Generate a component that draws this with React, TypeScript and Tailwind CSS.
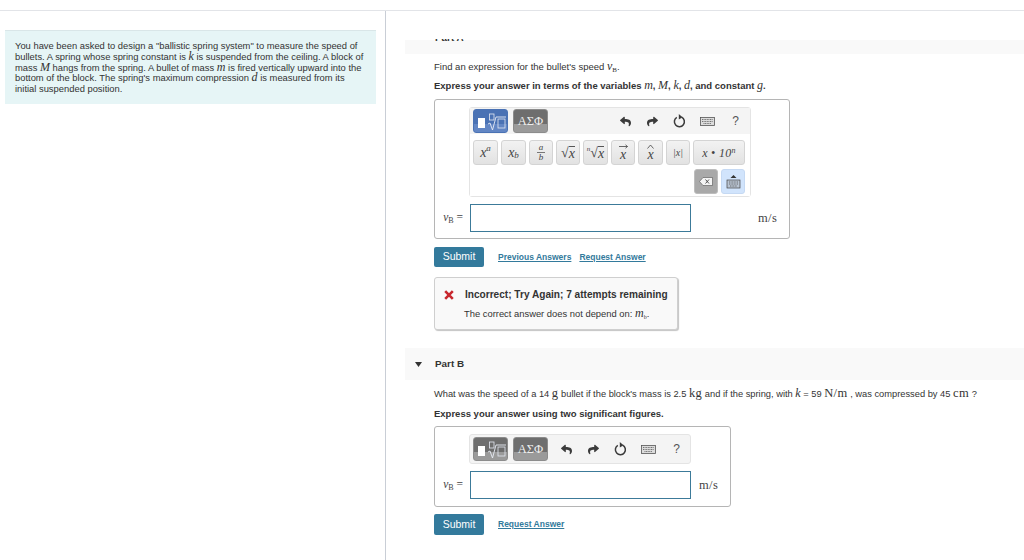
import { FaReply, FaShare } from "react-icons/fa";
import type { ReactNode } from "react";

const sans = "font-['Liberation_Sans',Arial,sans-serif]";
const serif = "font-['Liberation_Serif','Times_New_Roman',serif]";

function V({ children }: { children: ReactNode }) {
  return <i className={`${serif} text-[12px] font-normal leading-[0]`}>{children}</i>;
}

function Unit({ children }: { children: ReactNode }) {
  return <span className={`${serif} text-[12.5px] leading-[0] tracking-[0.4px]`}>{children}</span>;
}

function TemplateIcon() {
  return (
    <svg width="33" height="22" viewBox="1 1 33 22" fill="none">
      <rect x="5" y="9" width="7" height="10" fill="#fff" />
      <rect x="16.5" y="5" width="4.5" height="6" stroke="#e4e8f2" strokeWidth="0.8" />
      <path d="M15 15 L17 14 L19.5 21 L23 8 H33" stroke="#e8ecf5" strokeWidth="0.9" />
      <rect x="25" y="10" width="7" height="9" stroke="#e4e8f2" strokeWidth="0.8" />
    </svg>
  );
}

function ModeButtons({ active }: { active: boolean }) {
  return (
    <div className="flex gap-[5px]">
      <div
        className={`flex h-6 w-[35px] items-center justify-center rounded-[3px] border ${
          active
            ? "border-[#4a72b4] bg-[linear-gradient(#4a72b4_65%,#6286c4_65%)]"
            : "border-[#8c8c8c] bg-[linear-gradient(#6e6e6e_65%,#9a9a9a_65%)]"
        }`}
      >
        <TemplateIcon />
      </div>
      <div
        className={`flex h-6 w-[35px] items-center justify-center rounded-[3px] border border-[#8c8c8c] bg-[linear-gradient(#6e6e6e_65%,#9a9a9a_65%)] ${serif} text-[12.5px] text-[#eee]`}
      >
        ΑΣΦ
      </div>
    </div>
  );
}

function ResetIcon() {
  return (
    <svg width="13" height="14" viewBox="0 0 13 14" fill="none">
      <path d="M8.6 3.2 A5 5 0 1 1 3.8 3.4" stroke="#3b3b3b" strokeWidth="1.5" />
      <path d="M5.8 0 L9.6 3.2 L5.8 5.4 Z" fill="#3b3b3b" />
    </svg>
  );
}

function KeyboardIcon() {
  return (
    <svg width="15" height="9" viewBox="0 0 15 9">
      <rect x="0.5" y="0.5" width="14" height="8" fill="#dcdcdc" stroke="#555" strokeWidth="0.8" />
      <path d="M2 2.5 H13 M2 4.5 H13 M3.5 6.5 H11.5" stroke="#666" strokeWidth="0.9" strokeDasharray="1 .6" />
    </svg>
  );
}

function ToolIcons() {
  return (
    <div className="flex items-center gap-[14px] text-[#3b3b3b]">
      <FaReply size={11} className="w-[13px]" />
      <FaShare size={11} className="w-[13px]" />
      <ResetIcon />
      <KeyboardIcon />
      <span className={`${sans} w-[13px] text-center text-[12px] text-[#555]`}>?</span>
    </div>
  );
}

function MathKey({ w, children }: { w: string; children: ReactNode }) {
  return (
    <div
      className={`flex h-[25px] items-center justify-center rounded-[3px] border border-[#d4d4d4] bg-[linear-gradient(#f2f2f2,#e2e2e2)] ${serif} text-[14px] text-[#444] ${w}`}
    >
      {children}
    </div>
  );
}

function Root({ n }: { n?: boolean }) {
  return (
    <span className="flex items-start">
      {n && <span className="text-[7px] italic leading-[8px]">n</span>}
      <span className="text-[14px] leading-[16px]">√</span>
      <span className="mt-[1px] border-t border-[#555] text-[14px] italic leading-[14px]">x</span>
    </span>
  );
}

// the accent over the x is a small drawing, so it can't collide with the letter
function Accent({ arrow }: { arrow?: boolean }) {
  return (
    <span className="flex flex-col items-center">
      <svg width="9" height="5" viewBox="0 0 9 5" fill="none" stroke="#444" strokeWidth="0.8">
        {arrow ? <path d="M0 2.5 H8.5 M6.5 .8 L8.5 2.5 L6.5 4.2" /> : <path d="M1.5 4.5 L4.5 1 L7.5 4.5" />}
      </svg>
      <span className="italic leading-[12px]">x</span>
    </span>
  );
}

function MathKeys() {
  return (
    <div className="flex flex-col gap-1 bg-white pt-[6px] pr-[5px] pb-[2px] pl-[3px]">
      <div className="flex gap-[3px]">
        <MathKey w="w-[25px]">
          <i>x</i>
          <sup className="text-[9px] italic">a</sup>
        </MathKey>
        <MathKey w="w-[25px]">
          <i>x</i>
          <sub className="text-[9px] italic">b</sub>
        </MathKey>
        <MathKey w="w-[24px]">
          <span className="flex flex-col items-center text-[9px] italic leading-[9px]">
            <span className="border-b border-[#777] px-[2px]">a</span>
            <span>b</span>
          </span>
        </MathKey>
        <MathKey w="w-[24px]">
          <Root />
        </MathKey>
        <MathKey w="w-[25px]">
          <Root n />
        </MathKey>
        <MathKey w="w-[24px]">
          <Accent arrow />
        </MathKey>
        <MathKey w="w-[25px]">
          <Accent />
        </MathKey>
        <MathKey w="w-[24px]">
          <span className="text-[10px] italic">|x|</span>
        </MathKey>
        <MathKey w="w-[52px]">
          <span className="text-[12px] italic tracking-[0.3px]">
            x • 10<sup className="text-[8px]">n</sup>
          </span>
        </MathKey>
      </div>
      <div className="flex justify-end gap-[3px]">
        <div className="flex h-[25px] w-6 items-center justify-center rounded-[3px] border border-[#bdbdbd] bg-[#a9a9a9]">
          <svg width="14" height="9" viewBox="0 0 14 9">
            <path d="M4 .5 H13.5 V8.5 H4 L.5 4.5 Z" fill="#f4f4f4" stroke="#666" strokeWidth="0.7" />
            <path d="M6.5 2.5 L10 6.5 M10 2.5 L6.5 6.5" stroke="#444" strokeWidth="0.9" />
          </svg>
        </div>
        <div className="flex h-[25px] w-6 items-center justify-center rounded-[3px] border border-[#c5d9f3] bg-[#d1e4fc]">
          <svg width="15" height="15" viewBox="0 0 15 15">
            <path d="M7.5 1 L10.5 4 H4.5 Z" fill="#333" />
            <rect x="1" y="6" width="13" height="8" fill="#b9c4d2" stroke="#444" strokeWidth="0.7" />
            <path d="M3 8 H12 M3 10 H12 M4 12 H11" stroke="#555" strokeWidth="0.8" strokeDasharray="1 .6" />
          </svg>
        </div>
      </div>
    </div>
  );
}

function AnswerRow({ unitClass }: { unitClass: string }) {
  return (
    <div className="flex items-center">
      <div className="flex w-[35px] justify-end pr-[7px] text-[#444]">
        <span className={`${serif} whitespace-nowrap text-[11.5px]`}>
          <i>v</i>
          <sub className="text-[8px]">B</sub>&nbsp;=
        </span>
      </div>
      <div className="h-[28px] w-[221px] border border-[#3c7a99] bg-white" />
      <div className={`${unitClass} -mt-[2px] text-[#444]`}>
        <Unit>m/s</Unit>
      </div>
    </div>
  );
}

function SubmitRow({ links, tall }: { links: string[]; tall?: boolean }) {
  return (
    <div className="flex items-center">
      <button
        className={`w-[50px] rounded-[2px] bg-[#337a9c] text-center text-[10.5px] text-white ${tall ? "h-[21px]" : "h-[20px]"}`}
      >
        Submit
      </button>
      <div className="ml-[14px] flex gap-[8px]">
        {links.map((l) => (
          <a key={l} className="text-[8.5px] font-bold text-[#337a9c] underline">
            {l}
          </a>
        ))}
      </div>
    </div>
  );
}

export default function App() {
  return (
    <div className={`${sans} h-[560px] w-[1024px] overflow-hidden bg-white pt-[10px] text-[#333]`}>
      <div className="flex h-[550px] border-t border-[#e2e4e8]">
        <aside className="w-[386px] shrink-0 border-r border-[#c9ced6] pt-[19px] pl-[5px]">
          <div className="h-[74px] w-[371px] border-t border-[#d9e6e8] bg-[#e6f5f6] pt-[10px] pl-[10px] text-[9.4px] leading-[10.8px]">
            <p className="whitespace-nowrap">
              You have been asked to design a "ballistic spring system" to measure the speed of
              <br />
              bullets. A spring whose spring constant is <V>k</V> is suspended from the ceiling. A block of
              <br />
              mass <V>M</V> hangs from the spring. A bullet of mass <V>m</V> is fired vertically upward into the
              <br />
              bottom of the block. The spring's maximum compression <V>d</V> is measured from its
              <br />
              initial suspended position.
            </p>
          </div>
        </aside>

        <main className="min-w-0 flex-1 pt-[29px] pl-[19px]">
          <div className="relative h-[14px] bg-[#f9f9f9]">
            <div className="absolute -top-[1px] left-[30px] h-[3px] overflow-hidden text-[9.9px] font-bold">
              <div className="-mt-[8px]">Part A</div>
            </div>
          </div>

          <div className="pl-[29px]">
            <p className="mt-[7px] text-[9.5px] leading-[12px]">
              Find an expression for the bullet's speed <V>v</V>
              <sub className={`${serif} text-[7px]`}>B</sub>.
            </p>
            <p className="mt-[7px] text-[9.5px] font-bold leading-[12px]">
              Express your answer in terms of the variables <V>m</V>, <V>M</V>, <V>k</V>, <V>d</V>, and constant <V>g</V>.
            </p>

            <div className="mt-[7px] h-[140px] w-[356px] rounded-[3px] border border-[#b5b5b5] pt-[7px]">
              <div className="ml-[34px] w-[282px] rounded-[3px] border border-[#e4e4e4]">
                <div className="flex h-[26px] items-center justify-between bg-[#f4f4f4] pr-[8px] pl-[3px]">
                  <ModeButtons active />
                  <ToolIcons />
                </div>
                <MathKeys />
              </div>
              <div className="mt-[7px]">
                <AnswerRow unitClass="ml-[67px]" />
              </div>
            </div>

            <div className="mt-[8px]">
              <SubmitRow links={["Previous Answers", "Request Answer"]} />
            </div>

            <div className="mt-[10px] h-[53px] w-[244px] rounded-[3px] border border-[#cfcfcf] bg-[#f9f9f9] pt-[11px] pl-[9px] shadow-[1px_1px_1px_#c4c4c4]">
              <div className="flex items-center gap-[11px]">
                <svg width="10" height="10" viewBox="0 0 10 10">
                  <path d="M1.2 1.2 L8.8 8.8 M8.8 1.2 L1.2 8.8" stroke="#c8282e" strokeWidth="2.6" />
                </svg>
                <span className="text-[10.1px] font-bold leading-[12px]">Incorrect; Try Again; 7 attempts remaining</span>
              </div>
              <p className="mt-[7px] ml-[20px] text-[9.4px] leading-[12px]">
                The correct answer does not depend on: <V>m</V>
                <sub className={`${serif} text-[6px]`}>b</sub>.
              </p>
            </div>
          </div>

          <div className="mt-[18px] flex h-[32px] items-center bg-[#f9f9f9] pl-[10px]">
            <svg width="7" height="5" viewBox="0 0 7 5" className="mr-[13px]">
              <path d="M0 0 H7 L3.5 5 Z" fill="#333" />
            </svg>
            <span className="text-[9.9px] font-bold">Part B</span>
          </div>

          <div className="pl-[29px]">
            <p className="mt-[8px] whitespace-nowrap text-[9.3px] leading-[12px]">
              What was the speed of a 14 <Unit>g</Unit> bullet if the block's mass is 2.5 <Unit>kg</Unit> and if the spring, with <V>k</V> = 59 <Unit>N/m</Unit> , was compressed by 45 <Unit>cm</Unit> ?
            </p>
            <p className="mt-[8px] text-[9.5px] font-bold leading-[12px]">Express your answer using two significant figures.</p>

            <div className="mt-[6px] h-[81px] w-[297px] rounded-[3px] border border-[#b5b5b5] pt-[7px]">
              <div className="ml-[34px] flex h-[30px] w-[222px] items-center justify-between rounded-[3px] border border-[#e4e4e4] bg-[#f4f4f4] pr-[7px] pl-[3px]">
                <ModeButtons active={false} />
                <ToolIcons />
              </div>
              <div className="mt-[7px]">
                <AnswerRow unitClass="ml-[8px]" />
              </div>
            </div>

            <div className="mt-[7px]">
              <SubmitRow links={["Request Answer"]} tall />
            </div>
          </div>
        </main>
      </div>
    </div>
  );
}
